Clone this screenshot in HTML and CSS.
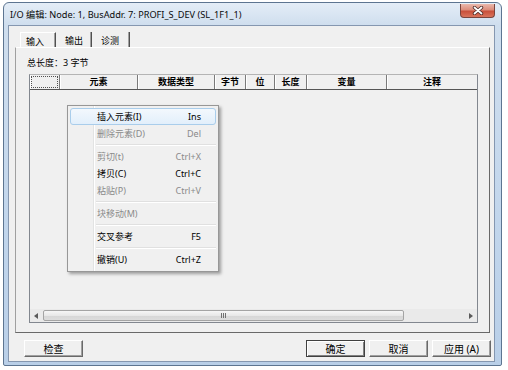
FILE: index.html
```html
<!DOCTYPE html>
<html lang="zh">
<head>
<meta charset="utf-8">
<title>I/O 编辑</title>
<link rel="stylesheet" href="styles.css">
</head>
<body>
<div class="window">
  <div class="titlebar">
    <span class="title">I/O 编辑: Node: 1, BusAddr. 7: PROFI_S_DEV (SL_1F1_1)</span>
    <div class="close">
      <svg width="12" height="9" viewBox="0 0 12 9"><path d="M2.5 1.5 L9.5 7.5 M9.5 1.5 L2.5 7.5" stroke="#4a2a26" stroke-width="3.4" stroke-linecap="round"/><path d="M2.5 1.5 L9.5 7.5 M9.5 1.5 L2.5 7.5" stroke="#ffffff" stroke-width="1.8" stroke-linecap="round"/></svg>
    </div>
  </div>
  <div class="client">
    <div class="tabs">
      <div class="tab active">输入</div>
      <div class="tab">输出</div>
      <div class="tab">诊测</div>
    </div>
    <div class="panel">
      <div class="total">总长度：3 字节</div>
      <div class="grid">
        <div class="thead">
          <div class="th"><span class="focus"></span></div>
          <div class="th">元素</div>
          <div class="th">数据类型</div>
          <div class="th">字节</div>
          <div class="th">位</div>
          <div class="th">长度</div>
          <div class="th">变量</div>
          <div class="th">注释</div>
        </div>
        <div class="tbody"></div>
        <div class="hscroll">
          <div class="sarrow"><svg width="4" height="6" viewBox="0 0 4 6"><path d="M4 0 L0 3 L4 6 Z" fill="#5a5a5a"/></svg></div>
          <div class="track">
            <div class="thumb"><span class="grip"></span></div>
          </div>
          <div class="sarrow"><svg width="4" height="6" viewBox="0 0 4 6"><path d="M0 0 L4 3 L0 6 Z" fill="#5a5a5a"/></svg></div>
        </div>
      </div>
    </div>
    <div class="buttons">
      <button class="btn">检查</button>
      <span class="spacer"></span>
      <button class="btn default">确定</button>
      <button class="btn">取消</button>
      <button class="btn">应用 (A)</button>
    </div>
  </div>
</div>

<div class="menu">
  <div class="mi hot"><span>插入元素(I)</span><span>Ins</span></div>
  <div class="mi dis"><span>删除元素(D)</span><span>Del</span></div>
  <div class="msep"></div>
  <div class="mi dis"><span>剪切(t)</span><span>Ctrl+X</span></div>
  <div class="mi"><span>拷贝(C)</span><span>Ctrl+C</span></div>
  <div class="mi dis"><span>粘贴(P)</span><span>Ctrl+V</span></div>
  <div class="msep"></div>
  <div class="mi dis"><span>块移动(M)</span><span></span></div>
  <div class="msep"></div>
  <div class="mi"><span>交叉参考</span><span>F5</span></div>
  <div class="msep"></div>
  <div class="mi"><span>撤销(U)</span><span>Ctrl+Z</span></div>
</div>
</body>
</html>
```

FILE: styles.css
```css
* { box-sizing: border-box; }

html, body {
  margin: 0;
  padding: 0;
}

body {
  width: 508px;
  height: 370px;
  overflow: hidden;
  position: relative;
  background: #ffffff;
  font-family: "Noto Sans", "Noto Sans CJK SC", sans-serif;
  font-size: 9px;
  color: #000;
}

.window {
  margin: 2px 0 0 3px;
  width: 499px;
  height: 364px;
  border: 1px solid #5d7591;
  border-radius: 6px 6px 2px 2px;
  background: linear-gradient(to bottom, #e4edf7 0px, #cfdeee 22px, #c2d6ec 60%, #b9cfe8 100%);
  padding: 0 6px 3px 4px;
  display: flex;
  flex-direction: column;
}

.titlebar {
  height: 22px;
  display: flex;
  align-items: flex-start;
}

.title {
  padding: 7px 0 0 2px;
  font-size: 9.2px;
  line-height: 10px;
  white-space: nowrap;
  color: #0a0a0a;
}

.close {
  margin-left: auto;
  margin-top: 1px;
  width: 35px;
  height: 14px;
  border: 1px solid #7a443c;
  border-top: none;
  border-radius: 0 0 4px 4px;
  background: linear-gradient(to bottom, #eab8ac 0%, #dc8d7b 45%, #c9503b 55%, #d9745c 100%);
  display: flex;
  align-items: center;
  justify-content: center;
}

.client {
  flex: 1;
  border: 1px solid #8597b0;
  background: #f0f0f0;
  display: flex;
  flex-direction: column;
  padding: 6px 4px 4px 6px;
}

.tabs {
  display: flex;
  height: 15px;
  margin-left: 5px;
}

.tab {
  height: 15px;
  line-height: 13px;
  padding: 2px 8px 0 9px;
  border-right: 1px solid #505050;
  box-shadow: inset -1px 0 0 #a0a0a0;
  color: #000;
}

.tab.active {
  padding: 2px 11px 0 5px;
  border-left: 1px solid #ffffff;
  border-top: 1px solid #ffffff;
}

.tab:last-child {
  padding-right: 10px;
}

.panel {
  height: 286px;
  border: 1px solid;
  border-color: #ffffff #696969 #696969 #a0a0a0;
  display: flex;
  flex-direction: column;
  padding: 8px 0 0 11px;
}

.total {
  height: 14px;
  line-height: 14px;
}

.grid {
  margin: 4px 0 0 2px;
  width: 449px;
  height: 249px;
  border: 1px solid #82878f;
  border-top-color: #b4b4b4;
  display: flex;
  flex-direction: column;
}

.thead {
  height: 15px;
  display: grid;
  grid-template-columns: 30px 78px 77px 31px 29px 32px 80px 90px;
  border-bottom: 1px solid #555555;
}

.th {
  position: relative;
  border-right: 1px solid #7a7a7a;
  box-shadow: inset 1px 0 0 #ffffff;
  text-align: center;
  line-height: 13px;
  font-weight: bold;
}

.th:last-child { border-right: none; }

.focus {
  position: absolute;
  left: 1px;
  top: 1px;
  right: 1px;
  bottom: 1px;
  border: 1px dotted #505050;
}

.tbody {
  flex: 1;
  background: #f0f0f0;
}

.hscroll {
  height: 13px;
  display: flex;
  align-items: stretch;
  background: #eaeaea;
}

.sarrow {
  width: 13px;
  display: flex;
  align-items: center;
  justify-content: center;
}

.track {
  flex: 1;
  display: flex;
  padding: 1px 61px 1px 0;
}

.thumb {
  width: 361px;
  border: 1px solid #a4a4a4;
  border-radius: 2px;
  background: linear-gradient(to bottom, #f6f6f6 0%, #e8e8e8 50%, #d6d6d6 51%, #dddddd 100%);
  display: flex;
  align-items: center;
  justify-content: center;
}

.grip {
  width: 5px;
  height: 5px;
  background: repeating-linear-gradient(to right, #707070 0, #707070 1px, transparent 1px, transparent 2px);
}

.buttons {
  margin-top: 7px;
  height: 17px;
  display: flex;
  gap: 4px;
  padding-left: 9px;
  margin-right: -1px;
}

.spacer { flex: 1; }

.btn {
  width: 59px;
  height: 17px;
  padding: 0;
  font-family: inherit;
  font-size: 10px;
  color: #000;
  background: #f0f0f0;
  border: 1px solid;
  border-color: #ffffff #696969 #696969 #ffffff;
  box-shadow: inset -1px -1px 0 #a0a0a0;
  line-height: 14px;
}

.btn.default {
  border-color: #404040;
  box-shadow: inset 1px 1px 0 #ffffff, inset -1px -1px 0 #808080;
}

.menu {
  position: absolute;
  left: 67px;
  top: 105px;
  width: 152px;
  height: 167px;
  border: 1px solid #979797;
  background: linear-gradient(to right, #f0f0f0 25px, #e2e3e3 25px, #e2e3e3 26px, #ffffff 26px, #ffffff 27px, #f0f0f0 27px);
  box-shadow: 2px 2px 3px rgba(0, 0, 0, 0.35);
  padding: 2px;
}

.mi {
  height: 17px;
  display: flex;
  align-items: center;
  justify-content: space-between;
  padding: 0 14px 0 26px;
  border: 1px solid transparent;
  border-radius: 3px;
  color: #000;
  white-space: nowrap;
}

.mi.hot {
  border-color: #a9cdeb;
  background: linear-gradient(to bottom, #f3f8fd 0%, #e2effb 100%);
}

.mi.dis { color: #8a8a8a; }

.msep {
  height: 6px;
  margin-left: 26px;
  background: linear-gradient(to bottom, transparent 2px, #e0e0e0 2px, #e0e0e0 3px, #ffffff 3px, #ffffff 4px, transparent 4px);
}
```
